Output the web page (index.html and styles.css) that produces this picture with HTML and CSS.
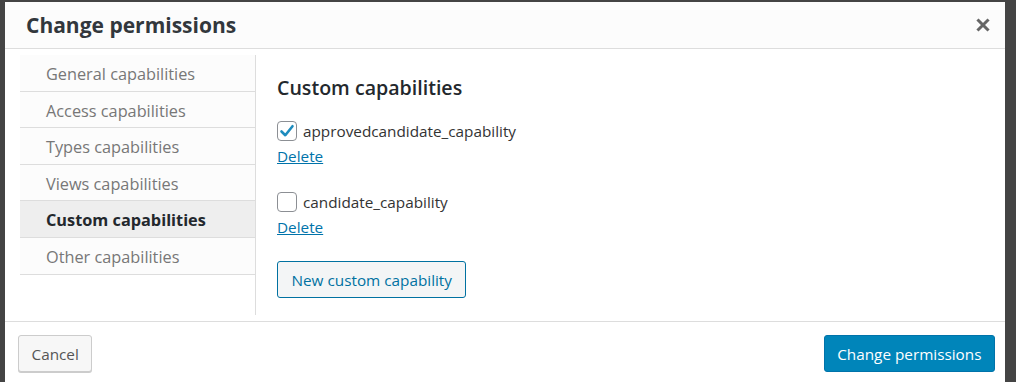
FILE: index.html
```html
<!DOCTYPE html>
<html lang="en">
<head>
  <meta charset="UTF-8" />
  <title>Change permissions</title>
  <link rel="stylesheet" href="styles.css">
</head>
<body>

<div class="modal">
  <div class="modal-header">
    <h1 class="modal-title">Change permissions</h1>
    <svg class="close" viewBox="0 0 14 14" width="14" height="14"><path d="M2.5 2.5 L11.5 11.5 M11.5 2.5 L2.5 11.5" stroke="#666" stroke-width="3" stroke-linecap="square"/></svg>
  </div>

  <div class="modal-body">
    <ul class="tabs">
      <li>General capabilities</li>
      <li>Access capabilities</li>
      <li>Types capabilities</li>
      <li>Views capabilities</li>
      <li class="active">Custom capabilities</li>
      <li>Other capabilities</li>
    </ul>

    <div class="panel">
      <h2>Custom capabilities</h2>

      <div class="cap">
        <label><span class="box checked"><svg viewBox="0 0 20 20" width="20" height="20"><path d="M4.5 10.5 L8.3 14.2 L15.5 5.2" fill="none" stroke="#1e8cbe" stroke-width="2.6" stroke-linecap="round" stroke-linejoin="round"/></svg></span>approvedcandidate_capability</label>
        <a href="#">Delete</a>
      </div>

      <div class="cap">
        <label><span class="box"></span>candidate_capability</label>
        <a href="#">Delete</a>
      </div>

      <button class="button secondary">New custom capability</button>
    </div>
  </div>

  <div class="modal-footer">
    <button class="button cancel">Cancel</button>
    <button class="button primary">Change permissions</button>
  </div>
</div>

</body>
</html>
```

FILE: styles.css
```css
body {
  margin: 0;
  padding: 2px 0 0 5px;
  background-color: #444;
  font-family: 'Open Sans', sans-serif;
  color: #32373c;
  overflow: hidden;
}

.modal {
  width: 1000px;
  height: 380px;
  background-color: #fff;
}

.modal-header {
  height: 46px;
  padding: 0 21px;
  display: flex;
  align-items: center;
  justify-content: space-between;
  background-color: #fcfcfc;
  border-bottom: 1px solid #ddd;
}

.modal-title {
  margin: 0;
  font-size: 21px;
  font-weight: 700;
  color: #32373c;
}

.close {
  margin-right: -6px;
}

.modal-body {
  display: flex;
  padding: 6px 0 0 15px;
  height: 266px;
  border-bottom: 1px solid #ddd;
}

.tabs {
  list-style: none;
  margin: 0;
  padding: 0;
  width: 235px;
  align-self: flex-start;
  background-color: #fcfcfc;
}

.tabs li {
  height: 35.6px;
  line-height: 38px;
  padding-left: 26px;
  font-size: 16.3px;
  color: #777;
  border-bottom: 1px solid #ddd;
}

.tabs li.active {
  background-color: #eee;
  color: #23282d;
  font-weight: 700;
}

.panel {
  flex: 1;
  box-sizing: border-box;
  height: 260px;
  border-left: 1px solid #ddd;
  padding: 20px 0 0 21px;
}

.panel h2 {
  margin: 0 0 18px;
  font-size: 19.6px;
  font-weight: 600;
  line-height: 26px;
  color: #23282d;
}

.cap {
  margin-bottom: 21px;
}

.cap label {
  display: flex;
  align-items: center;
  height: 24px;
  font-size: 15.3px;
  color: #333;
}

.box {
  width: 18px;
  height: 18px;
  margin-right: 6px;
  border: 1px solid #8c8f94;
  border-radius: 4px;
  background-color: #fff;
  position: relative;
}

.box svg {
  position: absolute;
  left: -1px;
  top: -1px;
}

.cap a {
  display: block;
  line-height: 26px;
  font-size: 15.3px;
  color: #0073aa;
  text-decoration: underline;
}

.button {
  font-family: 'Open Sans', sans-serif;
  font-size: 15.3px;
  height: 37px;
  padding: 0 12.5px;
  border-radius: 3px;
  cursor: pointer;
}

.button.secondary {
  padding: 0 13.5px;
  background-color: #f3f5f6;
  border: 1px solid #0071a1;
  color: #0071a1;
}

.modal-footer {
  display: flex;
  justify-content: space-between;
  padding: 13px 10px 0 13px;
}

.button.cancel {
  background-color: #f7f7f7;
  border: 1px solid #ccc;
  box-shadow: 0 1px 0 #ccc;
  color: #555;
}

.button.primary {
  background-color: #0085ba;
  border: 1px solid #0073aa;
  color: #fff;
}
```
